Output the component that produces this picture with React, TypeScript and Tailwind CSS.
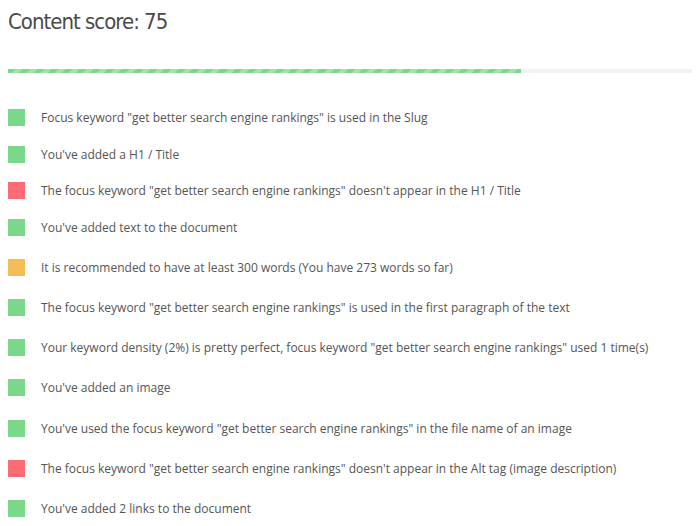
import React from "react";

type Status = "good" | "bad" | "warn";

interface Check {
  status: Status;
  text: string;
  gap: string;
}

const checks: Check[] = [
  { status: "good", text: 'Focus keyword "get better search engine rankings" is used in the Slug', gap: "mt-0" },
  { status: "good", text: "You've added a H1 / Title", gap: "mt-[20px]" },
  { status: "bad", text: 'The focus keyword "get better search engine rankings" doesn\'t appear in the H1 / Title', gap: "mt-[19px]" },
  { status: "good", text: "You've added text to the document", gap: "mt-[20px]" },
  { status: "warn", text: "It is recommended to have at least 300 words (You have 273 words so far)", gap: "mt-[23px]" },
  { status: "good", text: 'The focus keyword "get better search engine rankings" is used in the first paragraph of the text', gap: "mt-[23px]" },
  { status: "good", text: 'Your keyword density (2%) is pretty perfect, focus keyword "get better search engine rankings" used 1 time(s)', gap: "mt-[23px]" },
  { status: "good", text: "You've added an image", gap: "mt-[23px]" },
  { status: "good", text: 'You\'ve used the focus keyword "get better search engine rankings" in the file name of an image', gap: "mt-[24px]" },
  { status: "bad", text: 'The focus keyword "get better search engine rankings" doesn\'t appear in the Alt tag (image description)', gap: "mt-[23px]" },
  { status: "good", text: "You've added 2 links to the document", gap: "mt-[23px]" },
];

const squareColor: Record<Status, string> = {
  good: "bg-[#7ad88b]",
  bad: "bg-[#fd6b74]",
  warn: "bg-[#f6bd57]",
};

const App = () => {
  return (
    <div className="w-[700px] h-[526px] overflow-hidden bg-white px-2 font-['Open_Sans',sans-serif]">
      <h1 className="pt-[7px] text-[22px] leading-[30px] tracking-[-1px] text-[#4a4a4a] font-['DejaVu_Sans_Condensed',sans-serif]">
        Content score: 75
      </h1>

      <div className="mt-[32px] h-1 w-[684px] bg-[#f3f3f3]">
        <div className="h-1 w-[75%] bg-[repeating-linear-gradient(-45deg,#7ad88b_0px,#7ad88b_5px,#9fe3ab_5px,#9fe3ab_10px)]" />
      </div>

      <ul className="mt-[36px]">
        {checks.map((c, i) => (
          <li key={i} className={`flex h-[17px] items-center ${c.gap}`}>
            <span className={`h-[17px] w-[17px] shrink-0 ${squareColor[c.status]}`} />
            <span className="ml-4 whitespace-nowrap text-[12px] leading-[17px] text-[#555]">
              {c.text}
            </span>
          </li>
        ))}
      </ul>
    </div>
  );
};

export default App;
